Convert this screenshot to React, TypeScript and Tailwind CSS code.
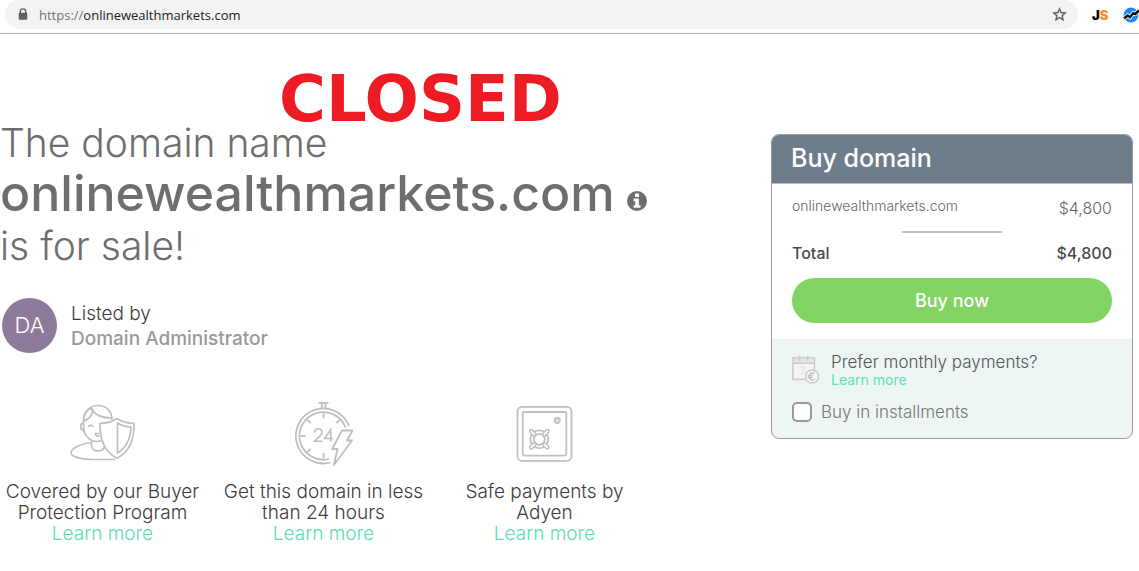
import type { ReactNode } from 'react';

function LockIcon() {
  return (
    <svg width="10" height="13" viewBox="0 0 10 13" aria-hidden="true">
      <path d="M2.3 5.5V3.6a2.7 2.7 0 0 1 5.4 0v1.9" fill="none" stroke="#5f6368" strokeWidth="1.4" />
      <rect x="0.7" y="4.8" width="8.6" height="7" rx="1" fill="#5f6368" />
    </svg>
  );
}

function StarIcon() {
  return (
    <svg width="17" height="17" viewBox="0 0 24 24" fill="#5f6368" stroke="#5f6368" strokeWidth="0.5" aria-hidden="true">
      <path d="M22 9.24l-7.19-.62L12 2 9.19 8.63 2 9.24l5.46 4.73L5.82 21 12 17.27 18.18 21l-1.63-7.03L22 9.24zM12 15.4l-3.76 2.27 1-4.28-3.32-2.88 4.38-.38L12 6.1l1.71 4.04 4.38.38-3.32 2.88 1 4.28L12 15.4z" />
    </svg>
  );
}

function ChartBadgeIcon() {
  return (
    <svg width="16" height="16" viewBox="0 0 16 16" aria-hidden="true">
      <circle cx="8" cy="8" r="7.4" fill="#1e88f5" />
      <path d="M1 11.500 4.600 8.500l2.400 1.700 3.200-4 2 .8L16 3.500" fill="none" stroke="#fff" strokeWidth="4" />
      <path d="M1 11.500 4.600 8.500l2.400 1.700 3.200-4 2 .8L16 3.500" fill="none" stroke="#111" strokeWidth="2.400" />
    </svg>
  );
}

function InfoIcon() {
  return (
    <svg width="20" height="20" viewBox="0 0 20 20" aria-hidden="true">
      <circle cx="10" cy="10" r="10" fill="#6e6e6e" />
      <path d="M8 2.6h4v3.3H8zM6.6 7.6h5.2v6.6h1.7v2.6H6.6v-2.6h1.6v-4H6.6z" fill="#fff" />
    </svg>
  );
}

function BuyerShieldIcon() {
  return (
    <svg width="90" height="75" viewBox="-2 0 90 75" fill="none" stroke="#bfbfbf" strokeWidth="1.7" strokeLinejoin="round" aria-hidden="true">
      <path d="M52 25c0-9-6-14.500-14-14.500S23.500 17 23.500 26v6c0 8 6.500 14.500 13 14.500 1.500 0 3.200-.3 4.700-1" />
      <path d="M23.500 28c-4 0-4 7 .8 8" />
      <path d="M24 26c5-2 8.500-6 8.500-11 3 5.500 10 8 19.500 8" />
      <path d="M33 14c-4-1-8 2-9 8" />
      <path d="M28.500 32c.5-2.200 4-2.200 4.500 0M35 38.500h4.500M35.500 39c.3 2 2.500 2.500 4 2" />
      <path d="M31.500 46.500v4c0 7 12 7.500 13.500 0" />
      <path d="M31.500 47.500C20 48.500 11 53.500 11 58c0 3.500 10 6.500 23 6.500h21" />
      <path d="M57 23.500c-4.500 3.300-10 4.800-17 4.800-.3 15 3 28 17 35 14-7 17.300-20 17-35-7 0-12.500-1.500-17-4.800Z" fill="#fff" />
      <path d="M57.500 28v30c9-5.500 13-14.500 13.500-26-5.500-.3-9.500-1.500-13.500-4Z" />
    </svg>
  );
}

function StopwatchIcon() {
  return (
    <svg width="90" height="75" viewBox="-1 0 90 75" fill="none" stroke="#bfbfbf" strokeWidth="1.8" aria-hidden="true">
      <path d="M69 31A27.500 27.500 0 1 0 50.500 67.500" />
      <path d="M65.500 32.500A23.800 23.800 0 1 0 49 64" />
      <path d="M38.500 7.800h10M41.800 8v5M45.500 8v5" />
      <path d="M43.500 18.500v5M43.500 58v5M20.500 41h5M27.300 24.800l3.300 3.300M27.300 57.200l3.300-3.300M59.700 24.800l-3.300 3.300" />
      <path d="M34.700 37.500c0-5 7.300-5 7.300 0 0 3.200-5.500 6-7.300 8.700h7.800M50.800 46.500V34.600l-6.300 8.900h8.700" strokeWidth="1.6" />
      <path d="M62 35.500h10.500l-5.500 10h5L54 70l3.500-16h-5.300Z" fill="#fff" strokeLinejoin="round" />
    </svg>
  );
}

function SafeIcon() {
  return (
    <svg width="90" height="75" viewBox="0 0 90 75" fill="none" stroke="#bfbfbf" strokeWidth="1.8" aria-hidden="true">
      <rect x="17.500" y="11.800" width="54" height="54" rx="4.500" />
      <rect x="22.700" y="17" width="43.600" height="43.600" rx="1.500" />
      <circle cx="57.300" cy="25.500" r="2.500" />
      <circle cx="57.300" cy="25.500" r="0.500" strokeWidth="0.800" />
      <circle cx="39.300" cy="44.300" r="9" />
      <circle cx="39.300" cy="44.300" r="5.500" />
      <g fill="#fff" strokeWidth="1.500">
        <rect x="-1.700" y="-13" width="3.400" height="7.500" rx="1.700" transform="translate(39.300 44.300) rotate(45)" />
        <rect x="-1.700" y="-13" width="3.400" height="7.500" rx="1.700" transform="translate(39.300 44.300) rotate(135)" />
        <rect x="-1.700" y="-13" width="3.400" height="7.500" rx="1.700" transform="translate(39.300 44.300) rotate(225)" />
        <rect x="-1.700" y="-13" width="3.400" height="7.500" rx="1.700" transform="translate(39.300 44.300) rotate(315)" />
      </g>
    </svg>
  );
}

function CalendarIcon() {
  return (
    <svg width="28" height="30" viewBox="0 0 28 30" fill="none" stroke="#cbcbcb" aria-hidden="true">
      <rect x="0.900" y="2.900" width="21.500" height="21.500" fill="#f5f5f5" strokeWidth="1.600" />
      <path d="M1.500 3.500h20.500v4.500H1.500z" fill="#e4e4e4" stroke="none" />
      <path d="M1 8.300h21.500" strokeWidth="1.400" />
      <path d="M7.500 0.500v5M15.500 0.500v5" strokeWidth="1.500" />
      <path d="M8 12h4.700l-3 8" stroke="#dedede" />
      <circle cx="20" cy="21.500" r="6.600" fill="#f5f5f5" strokeWidth="1.500" />
      <path d="M22.500 18.800c-3-2.200-5.300.3-5.300 2.700s2.300 4.900 5.300 2.700M15.700 20.700h5M15.700 22.500h5" stroke="#b5b5b5" strokeWidth="1.100" />
    </svg>
  );
}

function Benefit({ icon, lines }: { icon: ReactNode; lines: [string, string] }) {
  return (
    <li className="flex flex-col items-center text-center text-[19px] leading-[21px] font-light text-[#3c3c3c]">
      {icon}
      <p className="mt-[11px] whitespace-nowrap">
        {lines[0]}
        <br />
        {lines[1]}
      </p>
      <a href="#learn-more" className="text-[#57dfb0]">Learn more</a>
    </li>
  );
}

export default function App() {
  return (
    <div className="min-h-screen overflow-x-hidden bg-white font-['Inter',sans-serif]">
      <header className="flex h-[34px] items-start border-b border-[#b4b4b4] pl-[5px]">
        <div className="flex h-[29px] flex-1 items-center rounded-r-full rounded-l-full bg-[#f1f3f4] pr-[10px] pl-[13px]">
          <LockIcon />
          <span className="ml-[11px] flex-1 font-['Open_Sans',sans-serif] text-[13px] leading-[18px] text-[#202124]">
            <span className="text-[#70757a]">https://</span>onlinewealthmarkets.com
          </span>
          <button type="button" aria-label="Bookmark this page">
            <StarIcon />
          </button>
        </div>
        <div className="flex h-[30px] w-[61px] shrink-0 items-center gap-[15px] overflow-hidden pl-[14px]">
          <span className="font-['Inter',sans-serif] text-[13px] leading-[16px] font-black text-black">
            J<span className="text-[#f7931a]">S</span>
          </span>
          <span className="shrink-0"><ChartBadgeIcon /></span>
        </div>
      </header>

      <main className="relative flex items-start justify-between pt-[85px] pr-[6px]">
        <p className="absolute top-[28px] left-[279px] font-['DejaVu_Sans',sans-serif] text-[64px] leading-[74px] font-bold text-[#ed1c24]">
          CLOSED
        </p>

        <section className="w-[655px]">
          <h1 className="text-[39px] leading-[48px] font-light whitespace-nowrap text-[#6e6e6e]">
            The domain name
            <span className="flex items-end gap-[12px] text-[50px] leading-[53px] font-medium">
              onlinewealthmarkets.com
              <button type="button" aria-label="Domain details" className="pb-[9px]">
                <InfoIcon />
              </button>
            </span>
            <span className="block pt-[2px]">is for sale!</span>
          </h1>

          <div className="mt-[28px] flex items-center gap-[14px] pl-[2px]">
            <div className="flex size-[55px] items-center justify-center rounded-full bg-[#8e7a9a] text-[22px] font-light text-white">
              DA
            </div>
            <p className="text-[19px] leading-[25px] font-light text-[#3c3c3c]">
              Listed by
              <br />
              <span className="font-medium text-[#999999]">Domain Administrator</span>
            </p>
          </div>

          <ul className="mt-[42px] -ml-[8px] grid grid-cols-3">
            <Benefit icon={<BuyerShieldIcon />} lines={['Covered by our Buyer', 'Protection Program']} />
            <Benefit icon={<StopwatchIcon />} lines={['Get this domain in less', 'than 24 hours']} />
            <Benefit icon={<SafeIcon />} lines={['Safe payments by', 'Adyen']} />
          </ul>
        </section>

        <aside className="mt-[15px] w-[362px] shrink-0 overflow-hidden rounded-lg border border-[#999999] bg-[#edf6f4]">
          <h2 className="-mx-px -mt-px border-b border-[#b9bec6] bg-[#6f7c8c] px-[20px] text-[25px] leading-[49px] font-medium text-white">
            Buy domain
          </h2>
          <div className="bg-white px-[20px] pt-[14px] pb-[16px] text-[16px] leading-[20px] text-[#4a4a4a]">
            <div className="flex justify-between font-light text-[#666666]">
              <span className="text-[14px] leading-[16px]">onlinewealthmarkets.com</span>
              <span>$4,800</span>
            </div>
            <hr className="mx-auto mt-[13px] w-[100px] border-t-2 border-[#bdbdbd]" />
            <div className="mt-[10px] flex justify-between font-medium">
              <span>Total</span>
              <span>$4,800</span>
            </div>
            <button type="button" className="mt-[15px] h-[45px] w-full rounded-full bg-[#82d463] text-[18px] font-medium text-white">
              Buy now
            </button>
          </div>
          <div className="px-[20px] pt-[13px] pb-[16px] font-light">
            <div className="flex gap-[11px]">
              <span className="pt-[3px]"><CalendarIcon /></span>
              <p className="text-[17px] leading-[20px] text-[#555555]">
                Prefer monthly payments?
                <a href="#installments" className="block text-[14px] leading-[16px] font-normal text-[#5fe0b7]">Learn more</a>
              </p>
            </div>
            <label className="mt-[14px] flex items-center gap-[9px] text-[17px] leading-[20px] text-[#777777]">
              <input type="checkbox" className="size-[20px] appearance-none rounded-[5px] border-2 border-[#999999] bg-white" />
              Buy in installments
            </label>
          </div>
        </aside>
      </main>
    </div>
  );
}
